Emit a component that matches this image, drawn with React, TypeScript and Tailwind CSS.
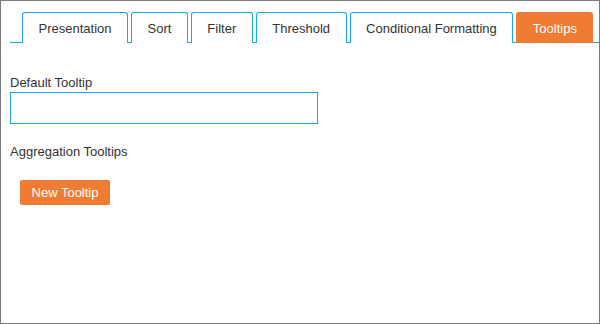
import React, { useState } from "react";

const TABS = ["Presentation", "Sort", "Filter", "Threshold", "Conditional Formatting", "Tooltips"];

export default function App() {
  const [active, setActive] = useState("Tooltips");

  return (
    <div
      className="w-[600px] h-[324px] bg-white border border-[#7a7a7a] text-[13px] text-[#333] overflow-hidden"
      style={{ fontFamily: '"Liberation Sans", Arial, sans-serif' }}
    >
      {/* Tab strip */}
      <div className="flex items-end gap-[3px] ml-[9px] mt-[11px] pl-[12px] border-b border-[#1aa9df]">
        {TABS.map((tab) => {
          const isActive = tab === active;
          return (
            <button
              key={tab}
              onClick={() => setActive(tab)}
              className={`shrink-0 whitespace-nowrap h-[31px] px-[15.5px] -mb-px rounded-t-[3px] border border-b-0 leading-none ${
                isActive
                  ? "bg-[#f07c34] border-[#f07c34] text-white"
                  : "bg-white border-[#1aa9df] text-[#333]"
              }`}
            >
              {tab}
            </button>
          );
        })}
      </div>

      {/* Tooltips panel */}
      <div className="px-[9px] pt-[32px]">
        <label className="block leading-[15px]">Default Tooltip</label>
        <input
          type="text"
          className="mt-[2px] block w-[308px] h-[32px] border border-[#1aa9df] px-2 outline-none"
        />
        <div className="mt-[20px] leading-[15px]">Aggregation Tooltips</div>
        <button className="mt-[21px] ml-[10px] h-[25px] w-[90px] bg-[#f07c34] text-white rounded-[2px] leading-none">
          New Tooltip
        </button>
      </div>
    </div>
  );
}
